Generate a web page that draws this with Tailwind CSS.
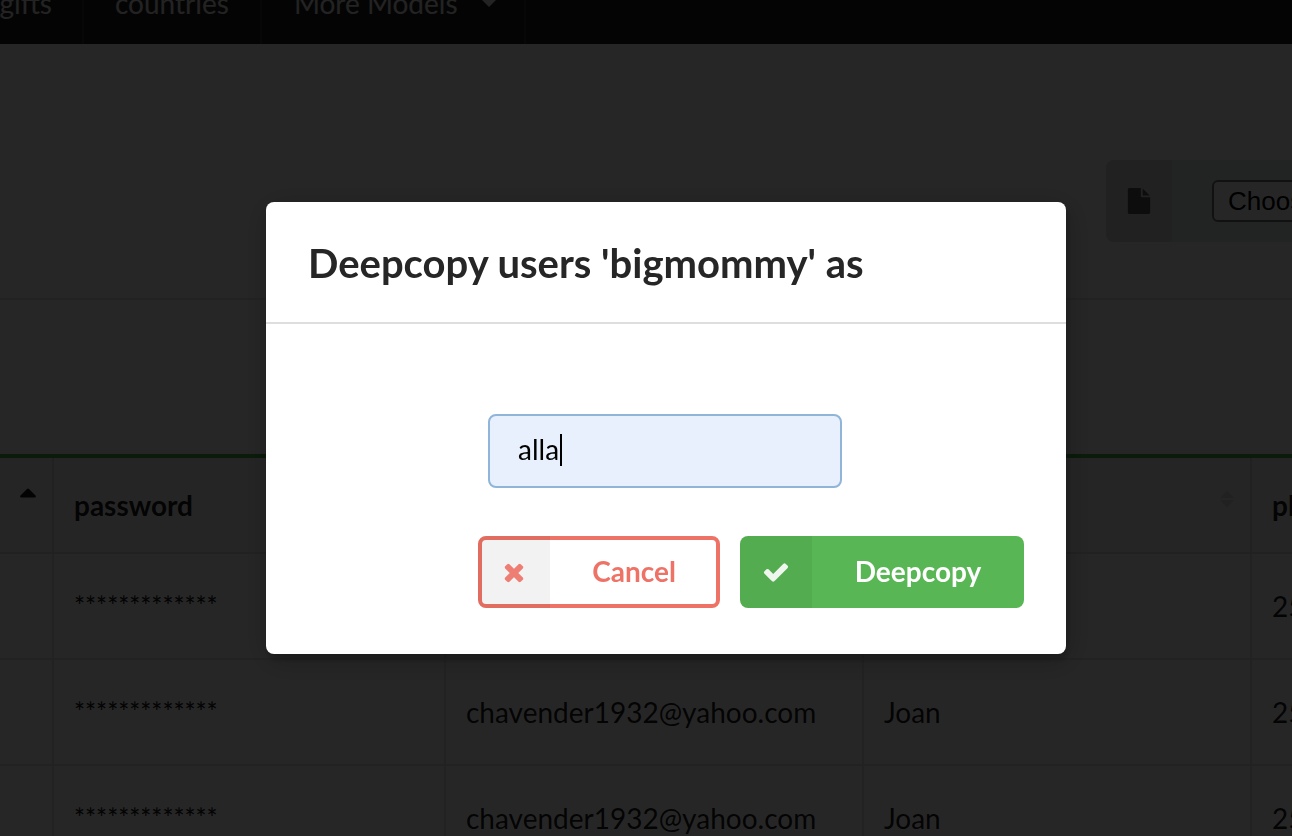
<!DOCTYPE html>
<html lang="en">
<head>
<meta charset="utf-8">
<title>Users</title>
<script src="https://cdn.jsdelivr.net/npm/@tailwindcss/browser@4"></script>
</head>
<body class="h-screen overflow-hidden bg-white font-['Lato',sans-serif] text-[28px] leading-7 text-black/90">
<nav class="flex h-11 items-end overflow-hidden bg-[#1b1c1d] text-white/90">
  <a href="#" class="flex w-[84px] justify-end border-r-2 border-white/10 pr-[30px] pb-[27px]">gifts</a>
  <a href="#" class="border-r-2 border-white/10 px-[31px] pb-[27px]">countries</a>
  <button type="button" class="flex items-center border-r-2 border-white/10 pr-7 pl-8 pb-[27px]">More Models
    <svg class="ml-6 h-2 w-3.5" viewBox="0 0 14 8" fill="currentColor" aria-hidden="true"><path d="M0 1h14L7 8z"/></svg>
  </button>
</nav>

<main>
  <section class="flex justify-end border-b-2 border-black/10 pt-[116px] pb-14">
    <label class="flex h-[82px] w-[186px] overflow-hidden rounded-l-lg bg-[#dceee8]">
      <span class="flex w-[66px] shrink-0 items-center justify-center bg-[#d9dada]">
        <svg class="size-[26px] text-black/60" viewBox="0 0 1792 1792" fill="currentColor" aria-hidden="true"><path d="M1152 512v-472q22 14 36 28l408 408q14 14 28 36h-472zm-128 32q0 40 28 68t68 28h544v1056q0 40-28 68t-68 28h-1344q-40 0-68-28t-28-68v-1600q0-40 28-68t68-28h800v544z"/></svg>
      </span>
      <input type="file" aria-label="Import file" class="ml-10 w-[360px] shrink-0 self-center font-['Liberation_Sans',sans-serif] text-[26px] file:h-[42px] file:rounded-md file:border-2 file:border-solid file:border-[#767676] file:bg-white file:px-3.5 file:py-0 file:text-black">
    </label>
  </section>

  <section class="pt-[154px]">
    <table class="w-full table-fixed border-separate border-spacing-0 overflow-hidden border-t-4 border-[#4cb04a] text-left">
      <colgroup><col class="w-[52px]"><col class="w-[392px]"><col class="w-[418px]"><col class="w-[388px]"><col></colgroup>
      <thead class="bg-[#f9f9f9]">
        <tr class="h-24">
          <th class="border-b-2 border-black/10 pb-6 pl-5" aria-label="username"><svg class="h-2.5 w-4" viewBox="0 0 16 10" fill="currentColor" aria-hidden="true"><path d="M7 1q1-1 2 0l6.500 6.500q1 1.500-.5 2H1q-1.500-.5-.5-2z"/></svg></th>
          <th class="border-b-2 border-l-2 border-black/10 px-5">password</th>
          <th class="border-b-2 border-l-2 border-black/10 px-5">email</th>
          <th class="border-b-2 border-l-2 border-black/10 px-4"><span class="flex items-center justify-between">name
            <svg class="mb-3 h-[18px] w-3.5 text-black/10" viewBox="0 0 14 18" fill="currentColor" aria-hidden="true"><path d="M7 0l7 8H0zM0 10h14l-7 8z"/></svg></span></th>
          <th class="overflow-hidden border-b-2 border-l-2 border-black/10 pl-5 whitespace-nowrap">phone</th>
        </tr>
      </thead>
      <tbody>
        <tr class="h-[106px]">
          <td class="border-b-2 border-black/10"></td>
          <td class="border-b-2 border-l-2 border-black/10 px-5 text-[26px] font-medium">*************</td>
          <td class="border-b-2 border-l-2 border-black/10 px-5">chavender1932@yahoo.com</td>
          <td class="border-b-2 border-l-2 border-black/10 px-5">Joan</td>
          <td class="overflow-hidden border-b-2 border-l-2 border-black/10 pl-5 whitespace-nowrap">254</td>
        </tr>
        <tr class="h-[106px]">
          <td class="border-b-2 border-black/10"></td>
          <td class="border-b-2 border-l-2 border-black/10 px-5 text-[26px] font-medium">*************</td>
          <td class="border-b-2 border-l-2 border-black/10 px-5">chavender1932@yahoo.com</td>
          <td class="border-b-2 border-l-2 border-black/10 px-5">Joan</td>
          <td class="overflow-hidden border-b-2 border-l-2 border-black/10 pl-5 whitespace-nowrap">254</td>
        </tr>
        <tr class="h-[106px]">
          <td class="border-b-2 border-black/10"></td>
          <td class="border-b-2 border-l-2 border-black/10 px-5 text-[26px] font-medium">*************</td>
          <td class="border-b-2 border-l-2 border-black/10 px-5">chavender1932@yahoo.com</td>
          <td class="border-b-2 border-l-2 border-black/10 px-5">Joan</td>
          <td class="overflow-hidden border-b-2 border-l-2 border-black/10 pl-5 whitespace-nowrap">254</td>
        </tr>
      </tbody>
    </table>
  </section>
</main>

<div class="fixed inset-0 flex items-center justify-center bg-black/85 pt-5 pl-10">
  <form role="dialog" aria-modal="true" aria-labelledby="dialog-title" class="w-full max-w-[800px] rounded-lg bg-white shadow-[2px_6px_6px_0_rgba(0,0,0,0.2),2px_6px_30px_4px_rgba(0,0,0,0.2)]">
    <h2 id="dialog-title" class="border-b-2 border-[#dededf] px-[42px] pt-[37px] pb-[35px] text-[40px] leading-12 font-bold text-[#262626]">Deepcopy users 'bigmommy' as</h2>
    <div class="px-[42px] pt-[90px] pb-[46px]">
      <div class="flex justify-center pr-0.5">
        <div class="relative w-[354px]">
          <input type="text" value="alla" aria-labelledby="dialog-title" class="block h-[74px] w-full rounded-lg border-2 border-[#8fb5d8] bg-[#e8f0fe] px-7 pb-1 text-black outline-none">
          <span class="absolute top-5 left-[72px] h-8 w-0.5 bg-black" aria-hidden="true"></span>
        </div>
      </div>
      <div class="mt-12 flex justify-end gap-5 font-bold">
        <button type="button" class="relative flex h-[72px] w-[242px] items-center rounded-lg border-4 border-[#ee7266] pl-[70px] text-[#ee7266]">
          <span class="absolute -inset-y-1 -left-1 flex w-[72px] items-center justify-center rounded-l-lg bg-black/5"><svg class="size-7 opacity-90" viewBox="0 0 1792 1792" fill="currentColor" aria-hidden="true"><path d="M1490 1322q0 40-28 68l-136 136q-28 28-68 28t-68-28l-294-294-294 294q-28 28-68 28t-68-28l-136-136q-28-28-28-68t28-68l294-294-294-294q-28-28-28-68t28-68l136-136q28-28 68-28t68 28l294 294 294-294q28-28 68-28t68 28l136 136q28 28 28 68t-28 68l-294 294 294 294q28 28 28 68z"/></svg></span>
          <span class="grow pb-0.5 text-center">Cancel</span>
        </button>
        <button type="submit" class="flex h-[72px] w-[284px] items-center overflow-hidden rounded-lg bg-[#59b655] text-white">
          <span class="flex h-full w-[72px] items-center justify-center bg-black/5"><svg class="size-7 opacity-90" viewBox="0 0 1792 1792" fill="currentColor" aria-hidden="true"><path d="M1671 566q0 40-28 68l-724 724-136 136q-28 28-68 28t-68-28l-136-136-362-362q-28-28-28-68t28-68l136-136q28-28 68-28t68 28l294 295 656-657q28-28 68-28t68 28l136 136q28 28 28 68z"/></svg></span>
          <span class="grow pb-0.5 text-center">Deepcopy</span>
        </button>
      </div>
    </div>
  </form>
</div>
</body>
</html>
